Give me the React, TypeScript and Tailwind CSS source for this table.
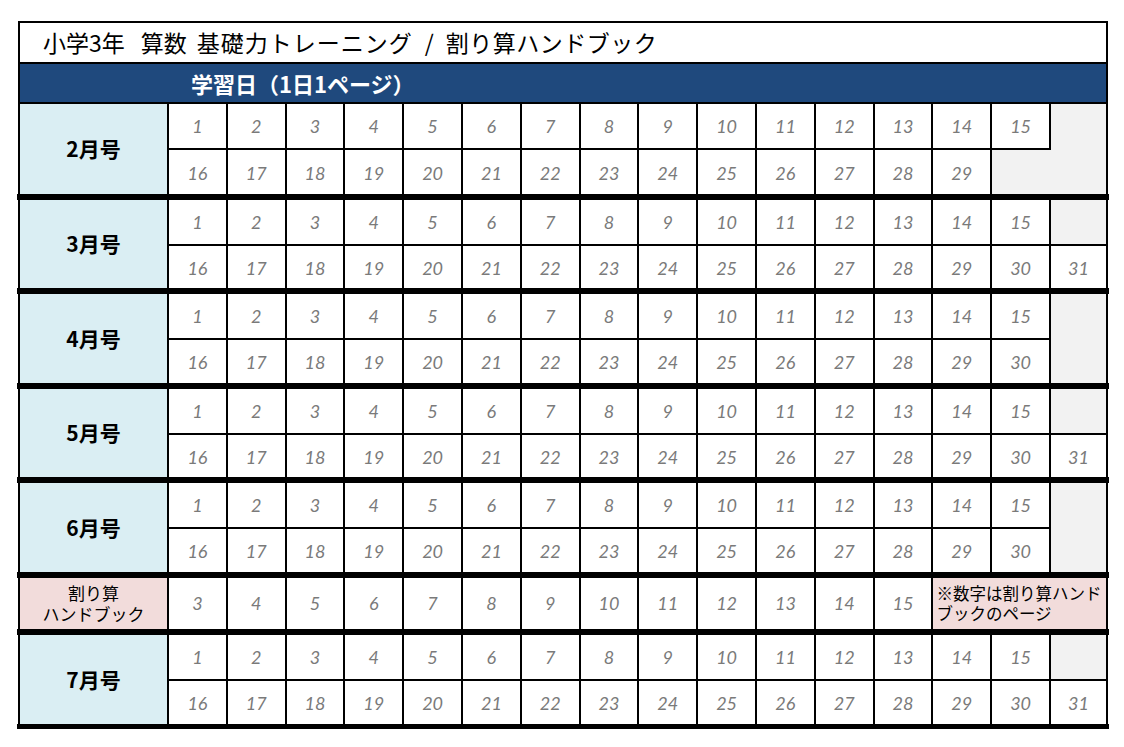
import React from 'react';

interface MonthBlockProps {
  label: string;
  days: number;
  height: number;
}

const jp = "font-['Noto_Sans_CJK_JP','Noto_Sans',sans-serif]";
// primary font with a short line box, CJK glyphs come from the fallback
const jpTight = "font-['Liberation_Sans','Noto_Sans_CJK_JP',sans-serif]";
const num = "font-['Lato','Liberation_Sans',sans-serif] italic text-[18px] text-[#7a7a7a]";

const months = [
  { label: '2月号', days: 29, height: 90 },
  { label: '3月号', days: 31, height: 88 },
  { label: '4月号', days: 30, height: 89 },
  { label: '5月号', days: 31, height: 88 },
  { label: '6月号', days: 30, height: 89 },
];

const ThickBar: React.FC<{ h?: string }> = ({ h = 'h-[6px]' }) => (
  <div className={`${h} -mx-[3px] bg-black`} />
);

const MonthBlock: React.FC<MonthBlockProps> = ({ label, days, height }) => {
  const top = Array.from({ length: 15 }, (_, i) => i + 1);
  const bottom = Array.from({ length: 16 }, (_, i) => i + 16);
  return (
    <div
      className="grid grid-cols-[147px_repeat(15,minmax(0,1fr))_57px] grid-rows-[46px_1fr]"
      style={{ height }}
    >
      <div
        className={`row-span-2 flex items-center justify-center bg-[#daeef3] text-[21px] font-bold text-black ${jp}`}
      >
        {label}
      </div>
      {top.map((d) => (
        <div
          key={`t${d}`}
          className={`flex items-center justify-center border-b-2 border-l-2 border-black bg-white ${num}`}
        >
          {d}
        </div>
      ))}
      <div
        className={
          days === 31
            ? 'border-b-2 border-l-2 border-black bg-[#f2f2f2]'
            : 'border-l-2 border-black bg-[#f2f2f2]'
        }
      />
      {bottom.map((d) =>
        d <= days ? (
          <div
            key={`b${d}`}
            className={`flex items-center justify-center border-l-2 border-black bg-white pt-[2px] ${num}`}
          >
            {d}
          </div>
        ) : (
          <div
            key={`b${d}`}
            className={
              d === days + 1 ? 'border-l-2 border-black bg-[#f2f2f2]' : 'bg-[#f2f2f2]'
            }
          />
        ),
      )}
    </div>
  );
};

const HandbookRow: React.FC = () => {
  const pages = Array.from({ length: 13 }, (_, i) => i + 3);
  return (
    <div className="grid h-[51px] grid-cols-[147px_repeat(15,minmax(0,1fr))_57px]">
      <div
        className={`flex flex-col items-center justify-center bg-[#f2dcdb] pt-[3px] text-[17px] leading-[21px] text-black ${jpTight}`}
      >
        <span>割り算</span>
        <span>ハンドブック</span>
      </div>
      {pages.map((p) => (
        <div
          key={p}
          className={`flex items-center justify-center border-l-2 border-black bg-white ${num}`}
        >
          {p}
        </div>
      ))}
      <div
        className={`col-span-3 flex items-center whitespace-nowrap border-l-2 border-black bg-[#f2dcdb] pl-[3px] text-[16.5px] leading-[20px] text-black ${jpTight}`}
      >
        <span>
          ※数字は割り算ハンド
          <br />
          ブックのページ
        </span>
      </div>
    </div>
  );
};

export default function App() {
  return (
    <div className="min-h-[747px] w-[1124px] bg-white pl-[18px] pt-[21px]">
      <div className="w-[1090px] border-x-2 border-t-2 border-black">
        <div
          className={`flex h-[41px] items-center whitespace-nowrap border-b-2 border-black bg-white pl-[23px] text-[23px] text-black ${jp}`}
        >
          <span>小学3年</span>
          <span className="ml-[16px]">算数</span>
          <span className="ml-[10px] tracking-[1px]">基礎力トレーニング</span>
          <span className="ml-[12px]">/</span>
          <span className="ml-[12px] tracking-[0.5px]">割り算ハンドブック</span>
        </div>
        <div
          className={`flex h-[40px] items-center border-b-2 border-black bg-[#1f497d] pl-[171px] text-[22px] font-bold text-white ${jp}`}
        >
          学習日（1日1ページ）
        </div>
        {months.map((m) => (
          <React.Fragment key={m.label}>
            <MonthBlock label={m.label} days={m.days} height={m.height} />
            <ThickBar />
          </React.Fragment>
        ))}
        <HandbookRow />
        <ThickBar />
        <MonthBlock label="7月号" days={31} height={89} />
        <ThickBar h="h-[5px]" />
      </div>
    </div>
  );
}
